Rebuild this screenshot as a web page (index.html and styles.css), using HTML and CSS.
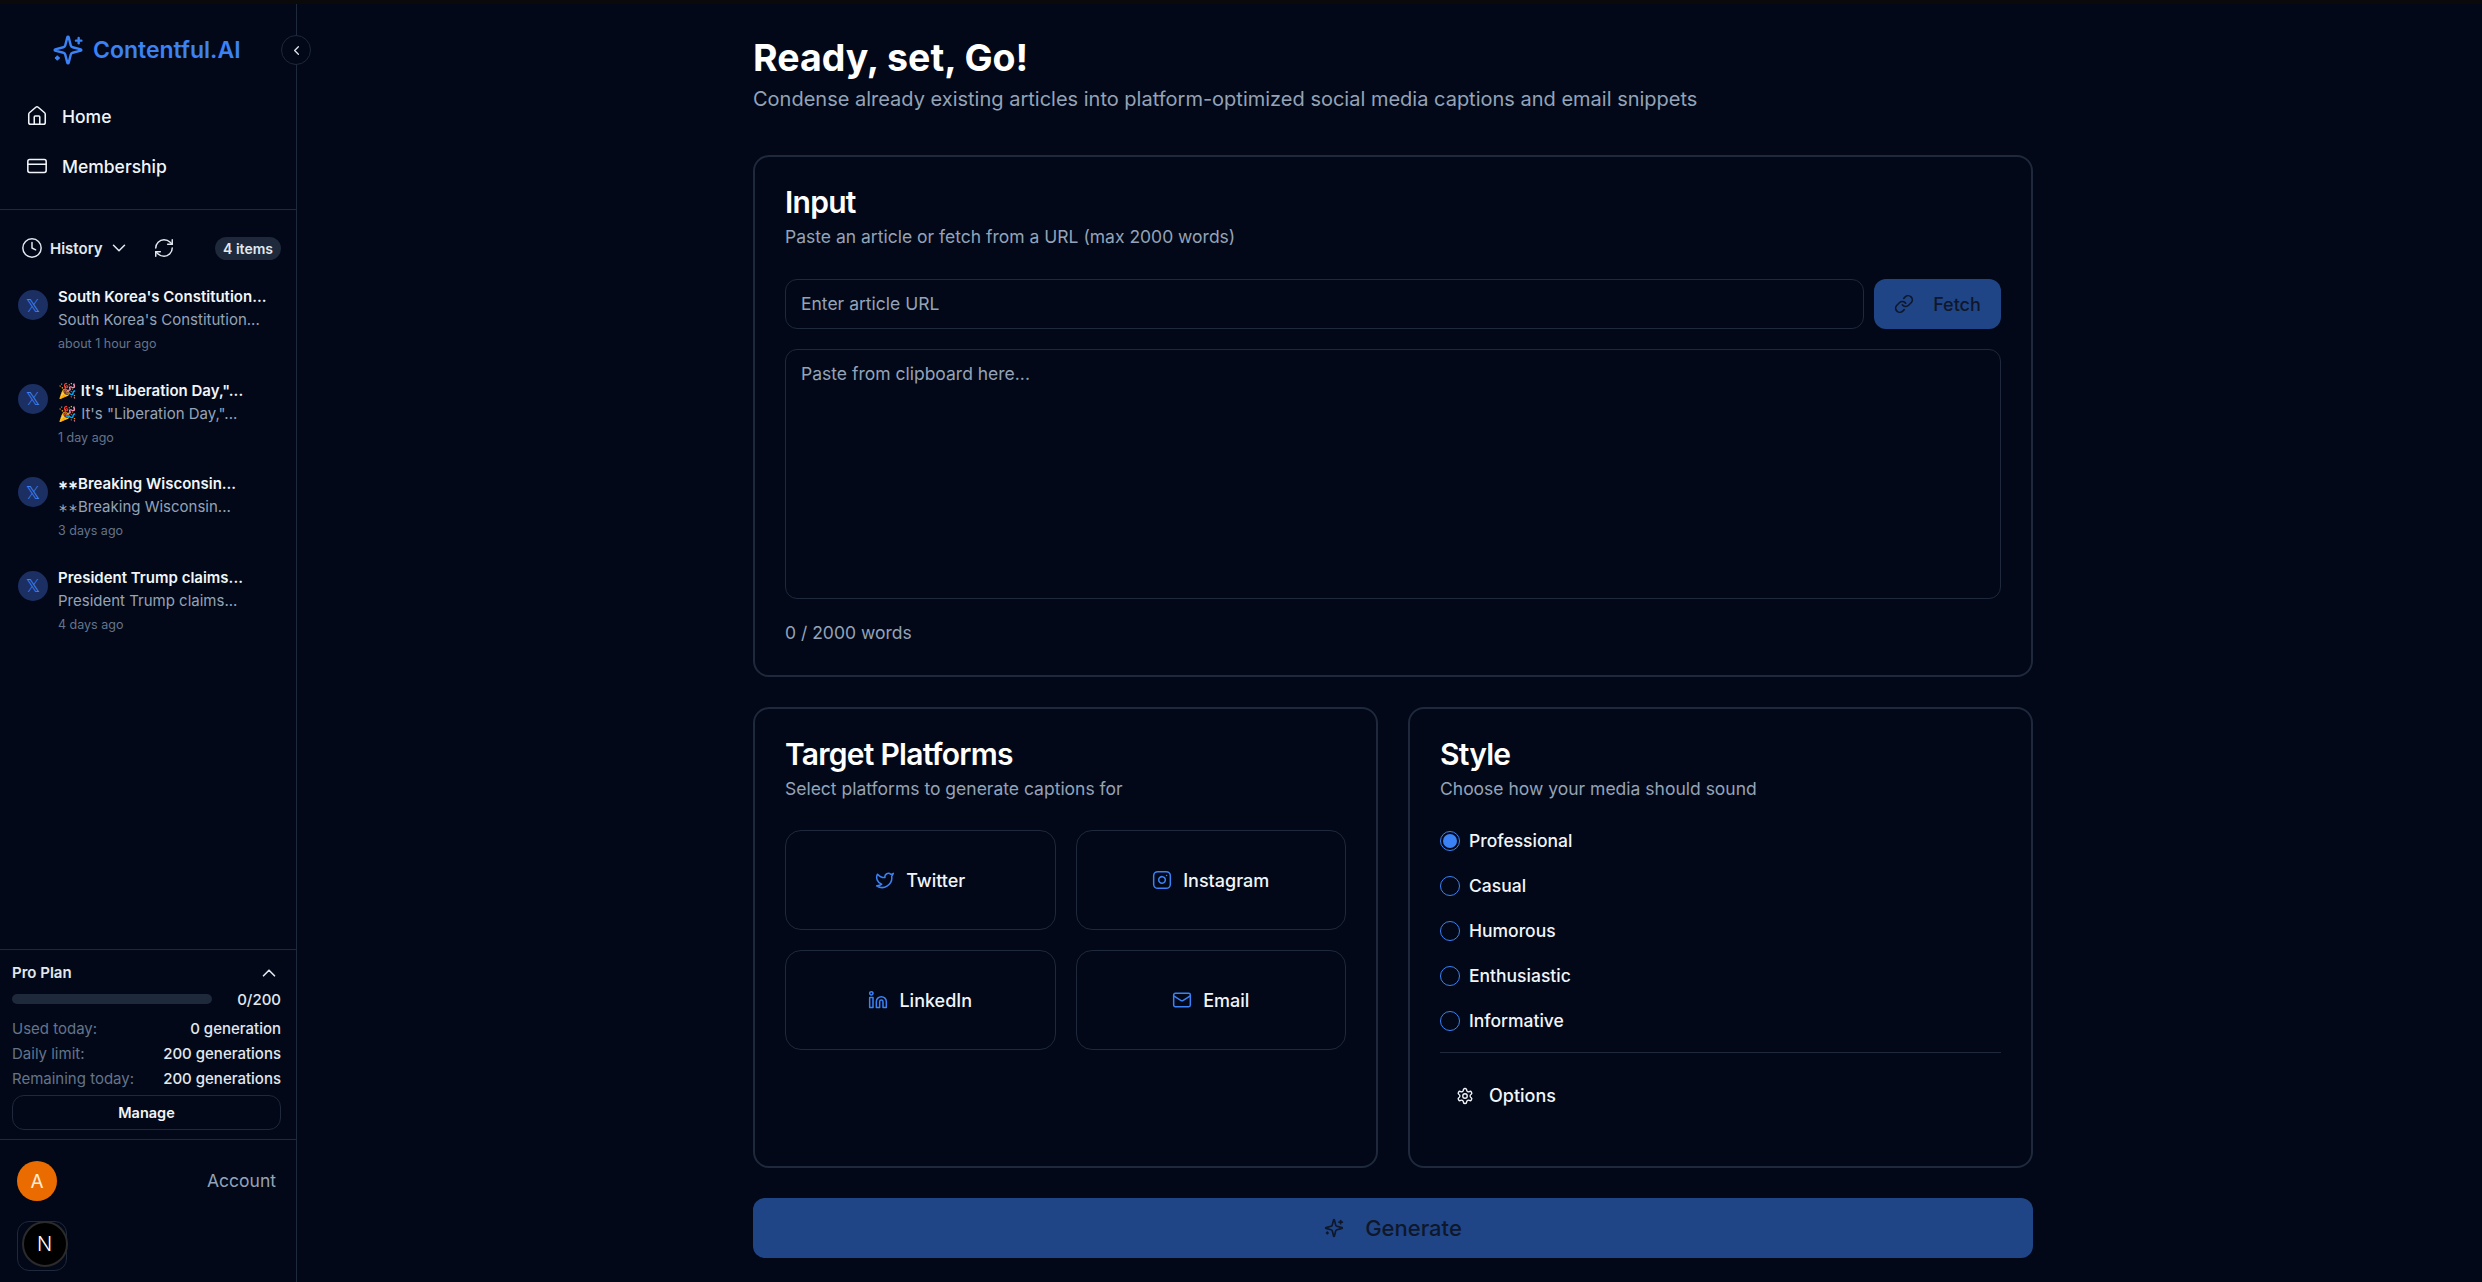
FILE: index.html
```html
<!DOCTYPE html>
<html lang="en">
<head>
  <meta charset="UTF-8">
  <title>Contentful.AI</title>
  <meta name="viewport" content="width=device-width, initial-scale=1.0">
  <link rel="stylesheet" href="styles.css">
</head>
<body>
  <div class="topstrip"></div>
  <div class="app">
    <aside class="sidebar">
      <div class="logo">
        <svg class="ico ico-logo" viewBox="0 0 24 24"><path d="M9.937 15.5A2 2 0 0 0 8.5 14.063l-6.135-1.582a.5.5 0 0 1 0-.962L8.5 9.936A2 2 0 0 0 9.937 8.5l1.582-6.135a.5.5 0 0 1 .963 0L14.063 8.5A2 2 0 0 0 15.5 9.937l6.135 1.581a.5.5 0 0 1 0 .964L15.5 14.063a2 2 0 0 0-1.437 1.437l-1.582 6.135a.5.5 0 0 1-.963 0z"/><path d="M20 3v4"/><path d="M22 5h-4"/><path d="M4 17v2"/><path d="M5 18H3"/></svg>
        <span>Contentful.AI</span>
      </div>
      <button class="collapse">
        <svg class="ico ico-tiny" viewBox="0 0 24 24"><path d="m15 18-6-6 6-6"/></svg>
      </button>

      <nav class="nav">
        <a class="nav-item">
          <svg class="ico ico-nav" viewBox="0 0 24 24"><path d="M15 21v-8a1 1 0 0 0-1-1h-4a1 1 0 0 0-1 1v8"/><path d="M3 10a2 2 0 0 1 .709-1.528l7-5.999a2 2 0 0 1 2.582 0l7 5.999A2 2 0 0 1 21 10v9a2 2 0 0 1-2 2H5a2 2 0 0 1-2-2z"/></svg>
          Home
        </a>
        <a class="nav-item">
          <svg class="ico ico-nav" viewBox="0 0 24 24"><rect x="2" y="5" width="20" height="14" rx="2"/><line x1="2" y1="10" x2="22" y2="10"/></svg>
          Membership
        </a>
      </nav>

      <section class="history">
        <div class="history-head">
          <svg class="ico ico-hist" viewBox="0 0 24 24"><circle cx="12" cy="12" r="10"/><polyline points="12 6 12 12 16 14"/></svg>
          <span class="history-label">History</span>
          <svg class="ico ico-chev" viewBox="0 0 24 24"><path d="m6 9 6 6 6-6"/></svg>
          <svg class="ico ico-refresh" viewBox="0 0 24 24"><path d="M3 12a9 9 0 0 1 9-9 9.75 9.75 0 0 1 6.74 2.74L21 8"/><path d="M21 3v5h-5"/><path d="M21 12a9 9 0 0 1-9 9 9.75 9.75 0 0 1-6.74-2.74L3 16"/><path d="M8 16H3v5"/></svg>
          <span class="badge">4 items</span>
        </div>

        <div class="history-item">
          <span class="x-icon">𝕏</span>
          <div class="history-text">
            <div class="h-title">South Korea's Constitution...</div>
            <div class="h-sub">South Korea's Constitution...</div>
            <div class="h-time">about 1 hour ago</div>
          </div>
        </div>
        <div class="history-item">
          <span class="x-icon">𝕏</span>
          <div class="history-text">
            <div class="h-title">🎉 It's "Liberation Day,"...</div>
            <div class="h-sub">🎉 It's "Liberation Day,"...</div>
            <div class="h-time">1 day ago</div>
          </div>
        </div>
        <div class="history-item">
          <span class="x-icon">𝕏</span>
          <div class="history-text">
            <div class="h-title"><span class="ast">∗∗</span>Breaking Wisconsin...</div>
            <div class="h-sub"><span class="ast">∗∗</span>Breaking Wisconsin...</div>
            <div class="h-time">3 days ago</div>
          </div>
        </div>
        <div class="history-item">
          <span class="x-icon">𝕏</span>
          <div class="history-text">
            <div class="h-title">President Trump claims...</div>
            <div class="h-sub">President Trump claims...</div>
            <div class="h-time">4 days ago</div>
          </div>
        </div>
      </section>

      <section class="plan">
        <div class="plan-head">
          <span>Pro Plan</span>
          <svg class="ico ico-up" viewBox="0 0 24 24"><path d="m18 15-6-6-6 6"/></svg>
        </div>
        <div class="plan-progress">
          <div class="bar"></div>
          <span>0/200</span>
        </div>
        <div class="plan-rows">
          <div class="plan-row"><span>Used today:</span><b>0 generation</b></div>
          <div class="plan-row"><span>Daily limit:</span><b>200 generations</b></div>
          <div class="plan-row"><span>Remaining today:</span><b>200 generations</b></div>
        </div>
        <button class="manage">Manage</button>
      </section>

      <div class="account">
        <span class="avatar">A</span>
        <span class="account-label">Account</span>
      </div>
    </aside>

    <main class="main">
      <div class="content">
        <h1>Ready, set, Go!</h1>
        <p class="lead">Condense already existing articles into platform-optimized social media captions and email snippets</p>

        <section class="card card-input">
          <h2>Input</h2>
          <p class="desc">Paste an article or fetch from a URL (max 2000 words)</p>
          <div class="url-row">
            <div class="field url-field">Enter article URL</div>
            <button class="btn-fetch">
              <svg class="ico ico-btn" viewBox="0 0 24 24"><path d="M10 13a5 5 0 0 0 7.54.54l3-3a5 5 0 0 0-7.07-7.07l-1.72 1.71"/><path d="M14 11a5 5 0 0 0-7.54-.54l-3 3a5 5 0 0 0 7.07 7.07l1.71-1.71"/></svg>
              Fetch
            </button>
          </div>
          <div class="field text-field">Paste from clipboard here...</div>
          <p class="count">0 / 2000 words</p>
        </section>

        <div class="columns">
          <section class="card">
            <h2>Target Platforms</h2>
            <p class="desc">Select platforms to generate captions for</p>
            <div class="platforms">
              <div class="platform">
                <svg class="ico ico-plat" viewBox="0 0 24 24"><path d="M22 4s-.7 2.1-2 3.4c1.6 10-9.4 17.3-18 11.6 2.2.1 4.4-.6 6-2C3 15.5.5 9.6 3 5c2.2 2.6 5.6 4.1 9 4-.9-4.2 4-6.6 7-3.8 1.1 0 3-1.2 3-1.2z"/></svg>
                Twitter
              </div>
              <div class="platform">
                <svg class="ico ico-plat" viewBox="0 0 24 24"><rect x="2" y="2" width="20" height="20" rx="5"/><path d="M16 11.37A4 4 0 1 1 12.63 8 4 4 0 0 1 16 11.37z"/><line x1="17.5" y1="6.5" x2="17.51" y2="6.5"/></svg>
                Instagram
              </div>
              <div class="platform">
                <svg class="ico ico-plat" viewBox="0 0 24 24"><path d="M16 8a6 6 0 0 1 6 6v7h-4v-7a2 2 0 0 0-2-2 2 2 0 0 0-2 2v7h-4v-7a6 6 0 0 1 6-6z"/><rect x="2" y="9" width="4" height="12"/><circle cx="4" cy="4" r="2"/></svg>
                LinkedIn
              </div>
              <div class="platform">
                <svg class="ico ico-plat" viewBox="0 0 24 24"><rect x="2" y="4" width="20" height="16" rx="2"/><path d="m22 7-8.97 5.7a1.94 1.94 0 0 1-2.06 0L2 7"/></svg>
                Email
              </div>
            </div>
          </section>

          <section class="card">
            <h2>Style</h2>
            <p class="desc">Choose how your media should sound</p>
            <div class="radios">
              <div class="radio-row"><span class="radio radio-on"></span>Professional</div>
              <div class="radio-row"><span class="radio"></span>Casual</div>
              <div class="radio-row"><span class="radio"></span>Humorous</div>
              <div class="radio-row"><span class="radio"></span>Enthusiastic</div>
              <div class="radio-row"><span class="radio"></span>Informative</div>
            </div>
            <div class="options">
              <svg class="ico ico-gear" viewBox="0 0 24 24"><path d="M12.22 2h-.44a2 2 0 0 0-2 2v.18a2 2 0 0 1-1 1.73l-.43.25a2 2 0 0 1-2 0l-.15-.08a2 2 0 0 0-2.73.73l-.22.38a2 2 0 0 0 .73 2.73l.15.1a2 2 0 0 1 1 1.72v.51a2 2 0 0 1-1 1.74l-.15.09a2 2 0 0 0-.73 2.73l.22.38a2 2 0 0 0 2.73.73l.15-.08a2 2 0 0 1 2 0l.43.25a2 2 0 0 1 1 1.73V20a2 2 0 0 0 2 2h.44a2 2 0 0 0 2-2v-.18a2 2 0 0 1 1-1.73l.43-.25a2 2 0 0 1 2 0l.15.08a2 2 0 0 0 2.73-.73l.22-.39a2 2 0 0 0-.73-2.73l-.15-.08a2 2 0 0 1-1-1.74v-.5a2 2 0 0 1 1-1.74l.15-.09a2 2 0 0 0 .73-2.73l-.22-.38a2 2 0 0 0-2.73-.73l-.15.08a2 2 0 0 1-2 0l-.43-.25a2 2 0 0 1-1-1.73V4a2 2 0 0 0-2-2z"/><circle cx="12" cy="12" r="3"/></svg>
              Options
            </div>
          </section>
        </div>

        <button class="btn-generate">
          <svg class="ico ico-btn" viewBox="0 0 24 24"><path d="M9.937 15.5A2 2 0 0 0 8.5 14.063l-6.135-1.582a.5.5 0 0 1 0-.962L8.5 9.936A2 2 0 0 0 9.937 8.5l1.582-6.135a.5.5 0 0 1 .963 0L14.063 8.5A2 2 0 0 0 15.5 9.937l6.135 1.581a.5.5 0 0 1 0 .964L15.5 14.063a2 2 0 0 0-1.437 1.437l-1.582 6.135a.5.5 0 0 1-.963 0z"/><path d="M20 3v4"/><path d="M22 5h-4"/><path d="M4 17v2"/><path d="M5 18H3"/></svg>
          Generate
        </button>
      </div>
    </main>
  </div>

  <div class="dev-badge"><span class="dev-circle">N</span></div>
</body>
</html>
```

FILE: styles.css
```css
* {
  box-sizing: border-box;
}

html, body {
  height: 100%;
}

body {
  margin: 0;
  overflow: hidden;
  background-color: #020817;
  color: #f8fafc;
  font-family: Inter, "Noto Sans", sans-serif;
}

h1, h2, p {
  margin: 0;
}

button {
  font-family: inherit;
  border: 0;
}

.topstrip {
  height: 4px;
  background-color: #0a0a0a;
}

.app {
  display: flex;
  height: 1278px;
}

.ico {
  fill: none;
  stroke: currentColor;
  stroke-width: 2;
  stroke-linecap: round;
  stroke-linejoin: round;
  flex: none;
}

/* sidebar */
.sidebar {
  position: relative;
  width: 297px;
  flex: none;
  display: flex;
  flex-direction: column;
  border-right: 1px solid #1e293b;
}

.logo {
  height: 92px;
  padding-left: 52px;
  display: flex;
  align-items: center;
  gap: 9px;
  color: #3b82f6;
  font-size: 23px;
  font-weight: 600;
}

.ico-logo {
  width: 32px;
  height: 32px;
  stroke-width: 1.8;
}

.collapse {
  position: absolute;
  top: 31px;
  left: 281px;
  width: 30px;
  height: 30px;
  padding: 0;
  border: 1px solid #1e293b;
  border-radius: 50%;
  background-color: #020817;
  color: #e2e8f0;
  display: flex;
  align-items: center;
  justify-content: center;
}

.ico-tiny {
  width: 15px;
  height: 15px;
}

.nav {
  height: 119px;
  margin-top: -5px;
  padding-left: 26px;
  border-bottom: 1px solid #1e293b;
}

.nav-item {
  height: 50px;
  display: flex;
  align-items: center;
  gap: 14px;
  font-size: 17.5px;
  font-weight: 500;
  color: #f1f5f9;
}

.ico-nav {
  width: 22px;
  height: 22px;
  stroke-width: 1.7;
}

.history {
  flex: 1;
  padding: 0 15px 0 18px;
}

.history-head {
  height: 48px;
  margin-top: 14px;
  display: flex;
  align-items: center;
  font-size: 15px;
  font-weight: 600;
  color: #e2e8f0;
}

.ico-hist {
  width: 22px;
  height: 22px;
  margin: 0 7px 0 3px;
  stroke-width: 1.6;
}

.ico-chev {
  width: 22px;
  height: 22px;
  margin-left: 5px;
  stroke-width: 1.7;
}

.ico-refresh {
  width: 22px;
  height: 22px;
  margin-left: 23px;
  stroke-width: 1.6;
}

.badge {
  margin-left: auto;
  height: 23px;
  padding: 0 8px;
  display: flex;
  align-items: center;
  border-radius: 12px;
  background-color: #1e293b;
  font-size: 14px;
  font-weight: 600;
}

.history-item {
  height: 93.5px;
  padding-top: 13px;
  display: flex;
  gap: 10px;
}

.x-icon {
  width: 30px;
  height: 30px;
  margin-top: 5px;
  flex: none;
  border-radius: 50%;
  background-color: #1c2f63;
  color: #3b82f6;
  display: flex;
  align-items: center;
  justify-content: center;
  font-family: "DejaVu Sans", sans-serif;
  font-size: 18px;
}

.history-text {
  min-width: 0;
}

.h-title {
  height: 23px;
  line-height: 23px;
  font-size: 15px;
  font-weight: 600;
  color: #f1f5f9;
  white-space: nowrap;
}

.h-sub {
  height: 23px;
  line-height: 23px;
  font-size: 15px;
  color: #94a3b8;
  white-space: nowrap;
}

.ast {
  font-size: 11.5px;
}

.h-time {
  height: 25px;
  line-height: 25px;
  font-size: 12.5px;
  color: #64748b;
}

.plan {
  height: 191px;
  padding: 10px 15px 0 12px;
  border-top: 1px solid #1e293b;
  border-bottom: 1px solid #1e293b;
}

.plan-head {
  height: 25px;
  display: flex;
  align-items: center;
  justify-content: space-between;
  font-size: 15px;
  font-weight: 600;
  color: #e2e8f0;
}

.ico-up {
  width: 22px;
  height: 22px;
  margin-right: 1px;
  stroke-width: 1.8;
}

.plan-progress {
  height: 28px;
  display: flex;
  align-items: center;
  justify-content: space-between;
  font-size: 15px;
  font-weight: 500;
  color: #e2e8f0;
}

.bar {
  width: 200px;
  height: 10px;
  border-radius: 5px;
  background-color: #1e293b;
}

.plan-rows {
  margin-top: 3px;
}

.plan-row {
  height: 25px;
  display: flex;
  align-items: center;
  justify-content: space-between;
  font-size: 15px;
  color: #64748b;
}

.plan-row b {
  font-weight: 500;
  color: #e2e8f0;
}

.manage {
  width: 100%;
  height: 35px;
  margin-top: 4px;
  border: 1px solid #1e293b;
  border-radius: 12px;
  background: none;
  color: #f1f5f9;
  font-size: 14.5px;
  font-weight: 600;
}

.account {
  height: 142px;
  flex: none;
  padding: 21px 20px 0 17px;
  display: flex;
  align-items: flex-start;
  justify-content: space-between;
}

.avatar {
  width: 40px;
  height: 40px;
  border-radius: 50%;
  background-color: #ea6c00;
  color: #ffedd5;
  display: flex;
  align-items: center;
  justify-content: center;
  font-size: 19px;
}

.account-label {
  line-height: 40px;
  font-size: 17.5px;
  color: #94a3b8;
}

.dev-badge {
  position: absolute;
  left: 17px;
  top: 1221px;
  width: 50px;
  height: 50px;
  border: 1px solid #1e293b;
  border-radius: 12px;
  display: flex;
  align-items: center;
  justify-content: center;
}

.dev-circle {
  width: 46px;
  height: 46px;
  margin-top: -4px;
  margin-left: 5px;
  flex: none;
  border: 2px solid #2b2b2b;
  border-radius: 50%;
  background-color: #000;
  color: #fff;
  display: flex;
  align-items: center;
  justify-content: center;
  font-size: 20px;
  font-weight: 300;
}

/* main */
.main {
  flex: 1;
  padding-left: 456px;
}

.content {
  width: 1280px;
}

h1 {
  margin-top: 30px;
  height: 48px;
  line-height: 48px;
  font-size: 37.5px;
  font-weight: 700;
  color: #fff;
}

.lead {
  height: 28px;
  margin-top: 3px;
  line-height: 28px;
  font-size: 20px;
  color: #94a3b8;
}

.card {
  border: 2px solid #1e293b;
  border-radius: 16px;
  padding: 30px 30px 0;
}

.card-input {
  height: 522px;
  margin-top: 42px;
}

h2 {
  height: 30px;
  line-height: 30px;
  font-size: 30px;
  font-weight: 600;
  letter-spacing: -0.025em;
  color: #fff;
}

.desc {
  margin-top: 6px;
  height: 28px;
  line-height: 28px;
  font-size: 17.5px;
  color: #94a3b8;
}

.url-row {
  margin-top: 28px;
  display: flex;
  gap: 10px;
}

.field {
  border: 1px solid #1e293b;
  border-radius: 12px;
  padding: 0 15px;
  font-size: 17.5px;
  color: #94a3b8;
}

.url-field {
  flex: 1;
  height: 50px;
  line-height: 48px;
}

.btn-fetch {
  width: 127px;
  height: 50px;
  border-radius: 12px;
  background-color: #1f4587;
  color: #0f172a;
  font-size: 18px;
  font-weight: 500;
  display: flex;
  align-items: center;
  justify-content: center;
  gap: 19px;
}

.ico-btn {
  width: 20px;
  height: 20px;
}

.text-field {
  height: 250px;
  margin-top: 20px;
  padding-top: 10px;
  line-height: 28px;
}

.count {
  margin-top: 20px;
  line-height: 28px;
  font-size: 17.5px;
  color: #94a3b8;
}

.columns {
  height: 461px;
  margin-top: 30px;
  display: grid;
  grid-template-columns: 1fr 1fr;
  grid-template-rows: 461px;
  gap: 30px;
}

.platforms {
  margin-top: 27px;
  display: grid;
  grid-template-columns: 1fr 1fr;
  gap: 20px;
}

.platform {
  height: 100px;
  border: 1px solid #1e293b;
  border-radius: 16px;
  display: flex;
  align-items: center;
  justify-content: center;
  gap: 11px;
  font-size: 18px;
  font-weight: 500;
  color: #f1f5f9;
}

.ico-plat {
  width: 20px;
  height: 20px;
  color: #3b82f6;
  stroke-width: 1.8;
}

.radios {
  margin-top: 15px;
}

.radio-row {
  height: 45px;
  display: flex;
  align-items: center;
  gap: 9px;
  font-size: 17.5px;
  font-weight: 500;
  color: #f1f5f9;
}

.radio {
  width: 20px;
  height: 20px;
  border: 1px solid #3b82f6;
  border-radius: 50%;
  display: flex;
  align-items: center;
  justify-content: center;
}

.radio-on::after {
  content: "";
  width: 14px;
  height: 14px;
  border-radius: 50%;
  background-color: #3b82f6;
}

.options {
  height: 86px;
  margin-top: 9px;
  padding-left: 16px;
  border-top: 1px solid #1e293b;
  display: flex;
  align-items: center;
  gap: 15px;
  font-size: 18px;
  font-weight: 500;
  color: #f1f5f9;
}

.ico-gear {
  width: 18px;
  height: 18px;
  stroke-width: 1.8;
}

.btn-generate {
  width: 100%;
  height: 60px;
  margin-top: 30px;
  border-radius: 12px;
  background-color: #1f4587;
  color: #0f172a;
  font-size: 22px;
  font-weight: 500;
  display: flex;
  align-items: center;
  justify-content: center;
  gap: 21px;
}
```
